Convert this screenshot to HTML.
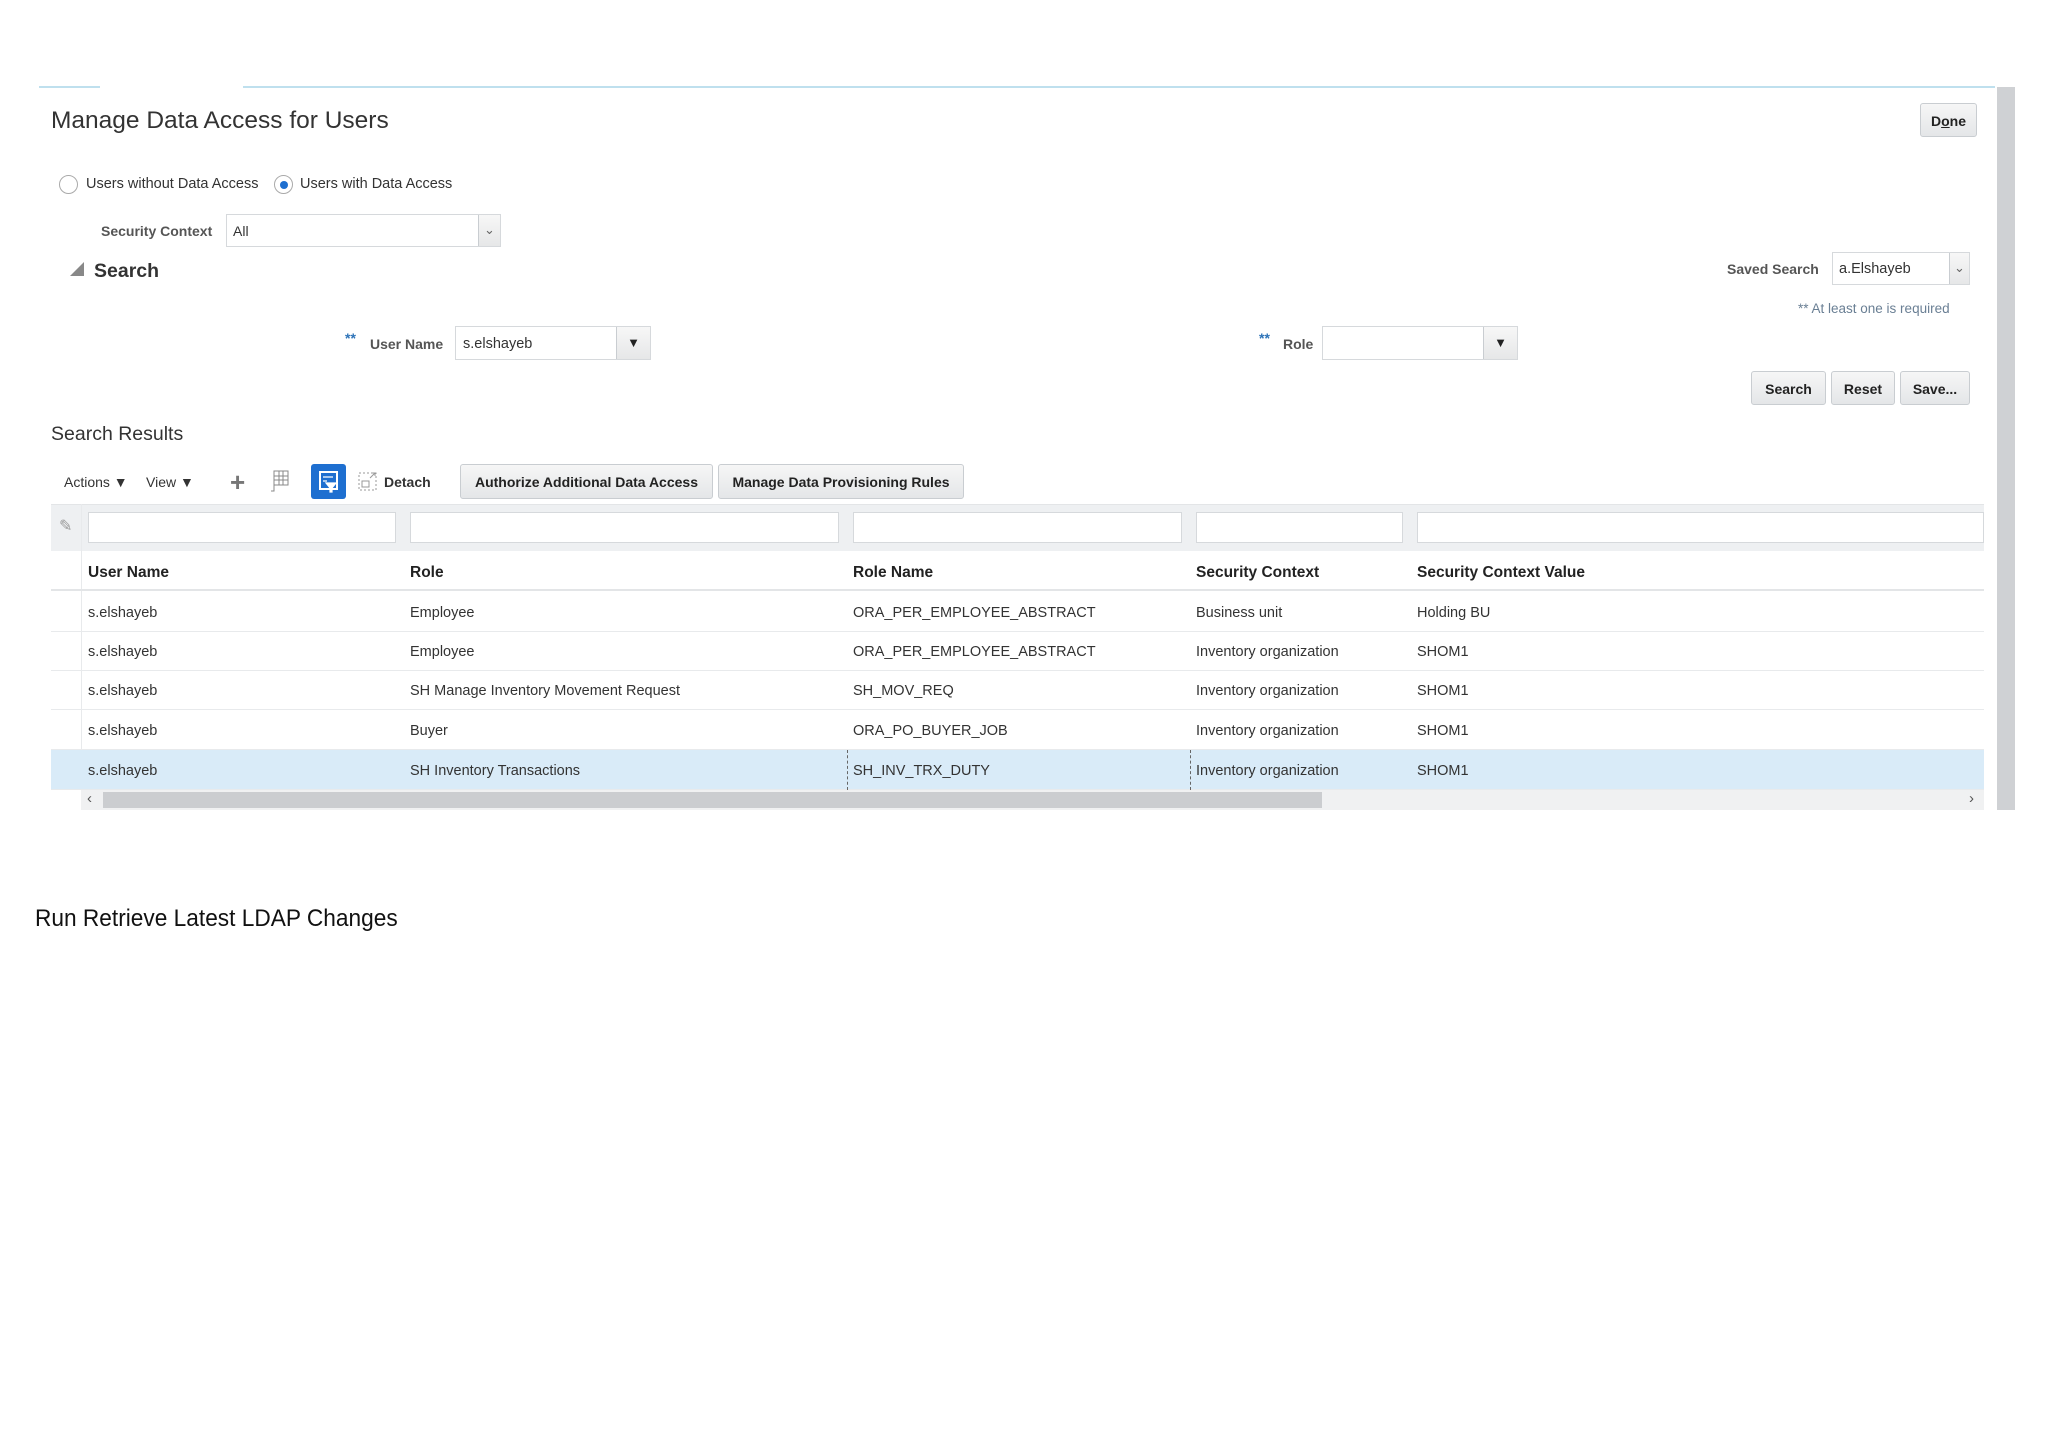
<!DOCTYPE html>
<html><head><meta charset="utf-8">
<style>
*{box-sizing:border-box;margin:0;padding:0}
body{width:2048px;height:1449px;background:#fff;font-family:"Liberation Sans",Arial,sans-serif;color:#333;position:relative;overflow:hidden;font-size:14.5px}
.a{position:absolute;white-space:nowrap}
.btn{position:absolute;background:linear-gradient(#f6f6f6,#e4e6e8);border:1px solid #c9cdd1;border-radius:3px;font-weight:bold;color:#222;text-align:center;font-size:14px}
.inp{position:absolute;background:#fff;border:1px solid #d6d9dc}
.dd{position:absolute;top:0;bottom:0;right:0;border-left:1px solid #c9cdd1;background:linear-gradient(#f7f7f7,#e6e7e8);text-align:center;font-size:13px}
.row{position:absolute;left:51px;width:1933px;height:40px;border-bottom:1px solid #e8eaec}
.row span{position:absolute;top:13px}
.hd span{font-weight:bold;color:#222;font-size:15.5px}
</style></head><body>
<div class="a" style="left:39px;top:86px;width:61px;height:2px;background:#bfe0ee"></div>
<div class="a" style="left:243px;top:86px;width:1752px;height:2px;background:#bfe0ee"></div>
<div class="a" style="left:1997px;top:87px;width:18px;height:723px;background:#cfd1d4"></div>
<div class="a" style="left:51px;top:107px;font-size:24.5px;color:#333">Manage Data Access for Users</div>
<div class="btn" style="left:1920px;top:103px;width:57px;height:34px;line-height:34px">D<u>o</u>ne</div>

<div class="a" style="left:59px;top:175px;width:19px;height:19px;border:1px solid #aaa;border-radius:50%;background:#fff"></div>
<div class="a" style="left:86px;top:176px">Users without Data Access</div>
<div class="a" style="left:274px;top:175px;width:19px;height:19px;border:1px solid #aaa;border-radius:50%;background:#fff"><div style="margin:5px auto;width:8px;height:8px;border-radius:50%;background:#1e6fd0"></div></div>
<div class="a" style="left:300px;top:176px">Users with Data Access</div>

<div class="a" style="left:101px;top:223px;font-weight:bold;color:#555;font-size:14px">Security Context</div>
<div class="inp" style="left:226px;top:214px;width:275px;height:33px"><span class="a" style="left:6px;top:8px;font-size:14px">All</span><div class="dd" style="width:22px;line-height:30px;color:#666">&#8964;</div></div>

<div class="a" style="left:70px;top:262px;width:0;height:0;border-left:14px solid transparent;border-bottom:14px solid #888"></div>
<div class="a" style="left:94px;top:260px;font-size:19.5px;font-weight:bold;color:#333">Search</div>

<div class="a" style="left:1727px;top:261px;font-weight:bold;color:#555;font-size:14px">Saved Search</div>
<div class="inp" style="left:1832px;top:252px;width:138px;height:33px"><span class="a" style="left:6px;top:8px">a.Elshayeb</span><div class="dd" style="width:20px;line-height:30px;color:#666">&#8964;</div></div>
<div class="a" style="left:1798px;top:301px;color:#6a7f94;font-size:13.5px">** At least one is required</div>

<div class="a" style="left:345px;top:330px;color:#2d73b8;font-weight:bold;font-size:14px">**</div>
<div class="a" style="left:370px;top:336px;font-weight:bold;color:#555;font-size:14px">User Name</div>
<div class="inp" style="left:455px;top:326px;width:196px;height:34px"><span class="a" style="left:7px;top:9px">s.elshayeb</span><div class="dd" style="width:34px;line-height:32px;color:#222">&#9660;</div></div>
<div class="a" style="left:1259px;top:330px;color:#2d73b8;font-weight:bold;font-size:14px">**</div>
<div class="a" style="left:1283px;top:336px;font-weight:bold;color:#555;font-size:14px">Role</div>
<div class="inp" style="left:1322px;top:326px;width:196px;height:34px"><div class="dd" style="width:34px;line-height:32px;color:#222">&#9660;</div></div>

<div class="btn" style="left:1751px;top:371px;width:75px;height:34px;line-height:34px">Search</div>
<div class="btn" style="left:1831px;top:371px;width:64px;height:34px;line-height:34px">Reset</div>
<div class="btn" style="left:1900px;top:371px;width:70px;height:34px;line-height:34px">Save...</div>

<div class="a" style="left:51px;top:423px;font-size:19.5px;color:#333">Search Results</div>

<div class="a" style="left:64px;top:474px;font-size:14px">Actions &#9660;</div>
<div class="a" style="left:146px;top:474px;font-size:14px">View &#9660;</div>
<div class="a" style="left:230px;top:467px;font-size:26px;color:#777;font-weight:bold">+</div>
<svg class="a" style="left:270px;top:470px" width="20" height="22" viewBox="0 0 20 22"><rect x="4" y="1" width="14" height="14" fill="none" stroke="#888"/><path d="M4 6h14M4 10h14M9 1v14M13 1v14M4 15v6h-3" stroke="#888" fill="none"/></svg>
<div class="a" style="left:311px;top:464px;width:35px;height:35px;background:#1e6fd0;border-radius:3px"><svg width="35" height="35" viewBox="0 0 35 35"><rect x="9" y="8" width="17" height="17" fill="none" stroke="#fff" stroke-width="2"/><path d="M12 13h10M12 17h4M15 19h10l-4 5v4h-2v-4z" stroke="#fff" fill="#fff" stroke-width="1.2"/></svg></div>
<svg class="a" style="left:358px;top:470px" width="20" height="22" viewBox="0 0 20 22"><rect x="1" y="3" width="17" height="17" fill="none" stroke="#999" stroke-dasharray="2 2"/><rect x="4" y="11" width="7" height="6" fill="none" stroke="#999"/><path d="M12 8l5-5M14 3h3v3" stroke="#999" fill="none"/></svg>
<div class="a" style="left:384px;top:474px;font-weight:bold;font-size:14px">Detach</div>
<div class="btn" style="left:460px;top:464px;width:253px;height:35px;line-height:35px">Authorize Additional Data Access</div>
<div class="btn" style="left:718px;top:464px;width:246px;height:35px;line-height:35px">Manage Data Provisioning Rules</div>

<div class="a" style="left:51px;top:504px;width:1933px;height:47px;background:#eef0f2;border-top:1px solid #e3e5e7"></div>
<div class="a" style="left:59px;top:516px;font-size:16px;color:#999">&#9998;</div>
<div class="inp" style="left:88px;top:512px;width:308px;height:31px"></div>
<div class="inp" style="left:410px;top:512px;width:429px;height:31px"></div>
<div class="inp" style="left:853px;top:512px;width:329px;height:31px"></div>
<div class="inp" style="left:1196px;top:512px;width:207px;height:31px"></div>
<div class="inp" style="left:1417px;top:512px;width:567px;height:31px"></div>
<div class="a" style="left:81px;top:504px;width:1px;height:286px;background:#e8eaec"></div>

<div class="row hd" style="top:551px;border-bottom:2px solid #e3e5e7"><span style="left:37px">User Name</span><span style="left:359px">Role</span><span style="left:802px">Role Name</span><span style="left:1145px">Security Context</span><span style="left:1366px">Security Context Value</span></div>
<div class="row" style="top:592px"><span style="left:37px">s.elshayeb</span><span style="left:359px">Employee</span><span style="left:802px">ORA_PER_EMPLOYEE_ABSTRACT</span><span style="left:1145px">Business unit</span><span style="left:1366px">Holding BU</span></div>
<div class="row" style="top:631px"><span style="left:37px">s.elshayeb</span><span style="left:359px">Employee</span><span style="left:802px">ORA_PER_EMPLOYEE_ABSTRACT</span><span style="left:1145px">Inventory organization</span><span style="left:1366px">SHOM1</span></div>
<div class="row" style="top:670px"><span style="left:37px">s.elshayeb</span><span style="left:359px">SH Manage Inventory Movement Request</span><span style="left:802px">SH_MOV_REQ</span><span style="left:1145px">Inventory organization</span><span style="left:1366px">SHOM1</span></div>
<div class="row" style="top:710px"><span style="left:37px">s.elshayeb</span><span style="left:359px">Buyer</span><span style="left:802px">ORA_PO_BUYER_JOB</span><span style="left:1145px">Inventory organization</span><span style="left:1366px">SHOM1</span></div>
<div class="row" style="top:750px;background:#d9ebf8"><span style="left:37px">s.elshayeb</span><span style="left:359px">SH Inventory Transactions</span><span style="left:802px">SH_INV_TRX_DUTY</span><span style="left:1145px">Inventory organization</span><span style="left:1366px">SHOM1</span>
<div style="position:absolute;left:796px;top:0;height:40px;border-left:1px dashed #666"></div><div style="position:absolute;left:1139px;top:0;height:40px;border-left:1px dashed #666"></div></div>
<div class="a" style="left:81px;top:790px;width:1903px;height:20px;background:#f0f1f2"></div>
<div class="a" style="left:103px;top:792px;width:1219px;height:16px;background:#cbcdd0"></div>
<div class="a" style="left:87px;top:790px;font-size:15px;color:#555">&#8249;</div>
<div class="a" style="left:1969px;top:790px;font-size:15px;color:#555">&#8250;</div>

<div class="a" style="left:35px;top:905px;font-size:24px;color:#111;transform:scaleX(0.945);transform-origin:left top">Run Retrieve Latest LDAP Changes</div>
</body></html>
